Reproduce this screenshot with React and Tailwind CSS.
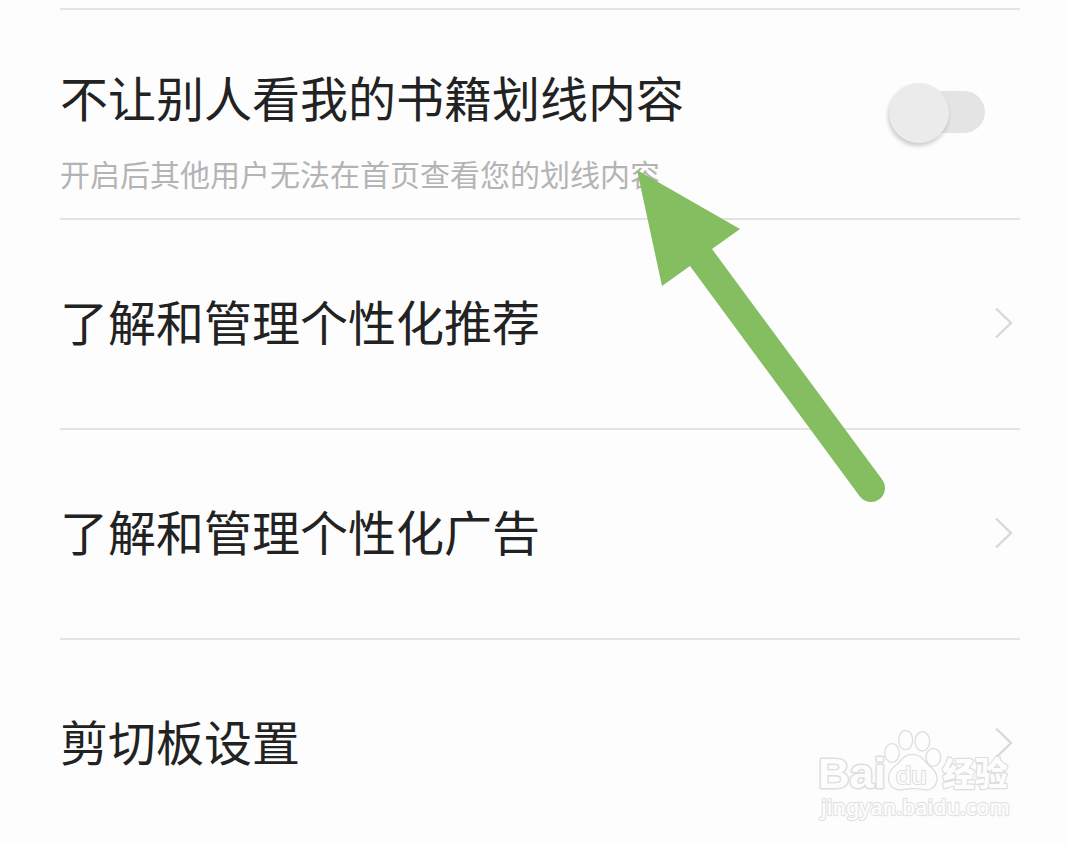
const links = ["了解和管理个性化推荐", "了解和管理个性化广告", "剪切板设置"];

function Chevron() {
  return (
    <svg className="mr-[7px] mb-0.5 h-8 w-5" viewBox="0 0 20 32" fill="none" stroke="#d8d8d8" strokeWidth="2.4">
      <path d="M3 1.5L18 16L3 30.5" />
    </svg>
  );
}

function Toggle() {
  return (
    <button className="relative mt-[81px] mr-[35px] h-[42px] w-[88px] rounded-full bg-[#e4e4e4]">
      <span className="absolute -top-2 -left-2 size-[60px] rounded-full bg-[#ebebeb] shadow-[-1px_3px_4px_rgba(0,0,0,0.2)]" />
    </button>
  );
}

function Arrow() {
  return (
    <svg className="pointer-events-none absolute top-[160px] left-[630px] h-[350px] w-[270px]" viewBox="630 160 270 350" fill="#84be60">
      <path d="M637 170L740 229L712 249L882.5 480A14 14 0 0 1 859.5 496L690 266L662 286Z" />
    </svg>
  );
}

function Watermark() {
  return (
    <svg
      className="pointer-events-none absolute top-[715px] left-[800px] h-[120px] w-[230px]"
      viewBox="0 0 690 360"
      fill="#fdfdfd"
      stroke="#dedede"
      strokeWidth="4"
      strokeLinejoin="round"
    >
      {/* Wordmark */}
      <text x="54" y="220" fontSize="128" fontWeight="700" textLength="204" lengthAdjust="spacingAndGlyphs" strokeWidth="9" paintOrder="stroke" className="font-['Liberation_Sans',sans-serif]">
        Bai
      </text>
      <text x="427" y="213" fontSize="98" fontWeight="900" textLength="196" strokeWidth="7" paintOrder="stroke" className="font-['Noto_Sans_CJK_SC',sans-serif]">
        经验
      </text>

      {/* Paw */}
      <path d="M337 118C310 118 302 140 288 151C271 164 262 181 267 199C272 219 290 228 309 224C328 220 350 220 369 224C391 229 409 216 411 194C413 174 400 163 387 151C373 138 364 118 337 118Z" />
      <ellipse cx="276" cy="114" rx="22" ry="28" />
      <ellipse cx="317" cy="75" rx="21" ry="29" />
      <ellipse cx="367" cy="79" rx="22" ry="29" />
      <ellipse cx="400" cy="127" rx="22" ry="27" />
      <text x="288" y="206" fontSize="74" textLength="92" lengthAdjust="spacingAndGlyphs" strokeWidth="6" paintOrder="stroke" className="font-['Liberation_Sans',sans-serif]">
        du
      </text>

      <text x="63" y="299" fontSize="66" fontWeight="500" textLength="566" lengthAdjust="spacingAndGlyphs" stroke="#e3e3e3" strokeWidth="7" paintOrder="stroke" className="font-['Noto_Sans',sans-serif]">
        jingyan.baidu.com
      </text>
    </svg>
  );
}

export default function App() {
  return (
    <div className="relative h-[844px] w-[1068px] overflow-hidden bg-[#fdfdfd] pr-12 pl-[60px] font-['Noto_Sans_CJK_SC',sans-serif] text-[#222]">
      <div className="h-2" />
      <div className="flex h-[210px] items-start justify-between border-t-2 border-[#e3e3e3]">
        <div>
          <h2 className="mt-[51px] text-[48px] leading-[70px]">不让别人看我的书籍划线内容</h2>
          <p className="mt-5 text-[30px] leading-[44px] text-[#b4b4b4]">开启后其他用户无法在首页查看您的划线内容</p>
        </div>
        <Toggle />
      </div>
      {links.map((label) => (
        <div key={label} className="flex h-[210px] items-center justify-between border-t-2 border-[#e3e3e3]">
          <span className="mb-2 text-[48px] leading-[70px]">{label}</span>
          <Chevron />
        </div>
      ))}
      <Arrow />
      <Watermark />
    </div>
  );
}
